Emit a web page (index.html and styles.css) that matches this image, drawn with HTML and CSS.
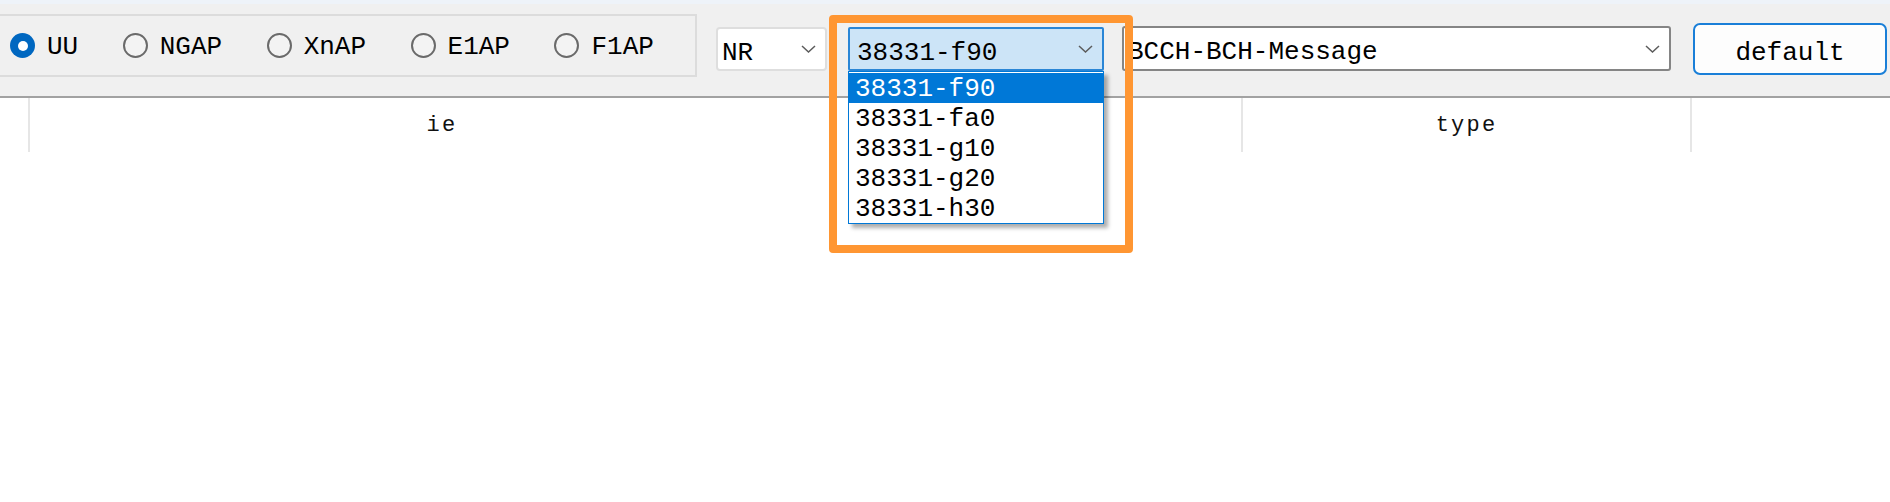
FILE: index.html
```html
<!DOCTYPE html>
<html lang="en">
<head>
<meta charset="utf-8">
<title>Message browser</title>
<link rel="stylesheet" href="styles.css">
</head>
<body>
<div class="app">
  <div class="toolbar">
    <div class="group">
      <label class="radio checked"><span class="dot"></span><span class="lbl">UU</span></label>
      <label class="radio"><span class="dot"></span><span class="lbl">NGAP</span></label>
      <label class="radio"><span class="dot"></span><span class="lbl">XnAP</span></label>
      <label class="radio"><span class="dot"></span><span class="lbl">E1AP</span></label>
      <label class="radio"><span class="dot"></span><span class="lbl">F1AP</span></label>
    </div>
    <div class="combo combo-nr">
      <span class="val">NR</span>
      <svg class="chev" width="15" height="8" viewBox="0 0 15 8"><path d="M1 1 L7.5 7 L14 1"/></svg>
    </div>
    <div class="combo combo-ver">
      <span class="val">38331-f90</span>
      <svg class="chev" width="15" height="8" viewBox="0 0 15 8"><path d="M1 1 L7.5 7 L14 1"/></svg>
    </div>
    <div class="combo combo-msg">
      <span class="val">BCCH-BCH-Message</span>
      <svg class="chev" width="15" height="8" viewBox="0 0 15 8"><path d="M1 1 L7.5 7 L14 1"/></svg>
    </div>
    <button class="btn"><span class="val">default</span></button>
  </div>

  <div class="header">
    <div class="col col-0"></div>
    <div class="col col-ie">ie</div>
    <div class="col col-val"></div>
    <div class="col col-type">type</div>
    <div class="col col-rest"></div>
  </div>

  <ul class="dropdown">
    <li class="item selected">38331-f90</li>
    <li class="item">38331-fa0</li>
    <li class="item">38331-g10</li>
    <li class="item">38331-g20</li>
    <li class="item">38331-h30</li>
  </ul>

  <div class="highlight"></div>
</div>
</body>
</html>
```

FILE: styles.css
```css
* {
  box-sizing: border-box;
}

html, body {
  margin: 0;
  padding: 0;
  background: #ffffff;
}

body {
  width: 1890px;
  height: 502px;
  overflow: hidden;
  font-family: "Liberation Mono", "DejaVu Sans Mono", monospace;
  font-size: 26px;
  color: #000;
}

.app {
  position: relative;
  width: 1890px;
  height: 502px;
  overflow: hidden;
}

/* ---------- toolbar ---------- */
.toolbar {
  height: 98px;
  display: flex;
  align-items: flex-start;
  background: #f0f0f0;
  border-top: 4px solid #eef3f9;
  border-bottom: 2px solid #a2a2a2;
}

.group {
  margin-top: 10px;
  margin-left: -12px;
  width: 709px;
  height: 63px;
  border: 2px solid #dcdcdc;
  display: flex;
  align-items: center;
  gap: 44.5px;
  padding-left: 20px;
}

.radio {
  display: flex;
  align-items: center;
  gap: 12px;
}

.radio .dot {
  width: 25px;
  height: 25px;
  border-radius: 50%;
  border: 2px solid #6a6a6a;
  background: #f3f3f3;
  display: grid;
  place-items: center;
}

.radio.checked .dot {
  border: none;
  background: #0067c0;
}

.radio.checked .dot::after {
  content: "";
  width: 10px;
  height: 10px;
  border-radius: 50%;
  background: #ffffff;
}

.radio .lbl {
  padding-top: 2px;
}

.combo {
  margin-top: 23px;
  height: 44px;
  display: flex;
  align-items: center;
  justify-content: space-between;
  padding-right: 9px;
  background: #ffffff;
}

.combo .val {
  padding-top: 7px;
  white-space: nowrap;
}

.chev path {
  fill: none;
  stroke: #5c5c5c;
  stroke-width: 1.5;
}

.combo-nr {
  margin-left: 19px;
  width: 111px;
  border: 2px solid #dedede;
  border-radius: 4px;
  padding-left: 4px;
}

.combo-ver {
  margin-left: 21px;
  width: 256px;
  background: #cce4f7;
  border: 2px solid #2a86d6;
  border-radius: 2px;
  padding-left: 7px;
}

.combo-msg {
  margin-left: 18px;
  margin-top: 22px;
  height: 45px;
  width: 549px;
  border: 2px solid #858585;
  border-radius: 3px;
  padding-left: 4px;
}

.btn {
  margin-left: 22px;
  margin-top: 19px;
  width: 194px;
  height: 52px;
  border: 2px solid #1a7fd8;
  border-radius: 7px;
  background: #fdfdfd;
  font-family: inherit;
  font-size: 26px;
  color: #000;
  padding: 0;
  display: flex;
  align-items: center;
  justify-content: center;
}

.btn .val {
  padding-top: 8px;
}

/* ---------- table header ---------- */
.header {
  height: 54px;
  display: flex;
  font-size: 22px;
  letter-spacing: 2.2px;
  color: #111;
}

.col {
  height: 54px;
  display: flex;
  align-items: center;
  justify-content: center;
  border-right: 2px solid #e6e6e6;
}

.col-0 { width: 30px; }
.col-ie { width: 826px; }
.col-val { width: 387px; }
.col-type { width: 449px; }
.col-rest { flex: 1; border-right: none; }

/* ---------- open dropdown list (overlay) ---------- */
.dropdown {
  position: absolute;
  left: 848px;
  top: 71px;
  width: 256px;
  margin: 0;
  padding: 1px 0 0;
  list-style: none;
  background: #ffffff;
  border: 1px solid #0078d7;
  box-shadow: 4px 4px 4px rgba(0, 0, 0, 0.32);
}

.item {
  height: 30px;
  padding: 2px 0 0 6px;
  line-height: 28px;
  white-space: nowrap;
}

.item.selected {
  background: #0078d7;
  color: #ffffff;
}

/* ---------- annotation frame (overlay) ---------- */
.highlight {
  position: absolute;
  left: 829px;
  top: 15px;
  width: 304px;
  height: 238px;
  border: 8px solid #ff9632;
  border-radius: 4px;
  pointer-events: none;
}
```
